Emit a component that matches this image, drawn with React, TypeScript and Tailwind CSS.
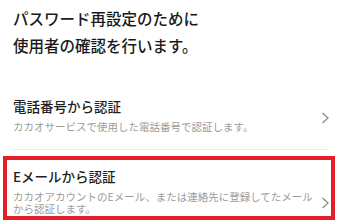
import React from 'react';

/**
 * Chevron pointing right, drawn thin and gray
 */
function Chevron() {
  return (
    <svg width="9" height="12" viewBox="0 0 9 12" fill="none" className="block">
      <path d="M1.5 1 L7 6 L1.5 11" stroke="#8c8c8c" strokeWidth="1.3" strokeLinejoin="miter" />
    </svg>
  );
}

interface RowProps {
  title: string;
  desc: string;
  chevronTop: string;
}

function AuthRow({ title, desc, chevronTop }: RowProps) {
  return (
    <div className="flex pl-[13px]">
      <div className="w-[305px]">
        <p className="text-[13.5px] leading-[20px] font-medium text-[#1e1e1e]">{title}</p>
        <p className="mt-[5px] text-[10.5px] leading-[12px] text-[#9c9c9c]">{desc}</p>
      </div>
      <div className={`flex-1 flex justify-start pl-[3px] ${chevronTop}`}>
        <Chevron />
      </div>
    </div>
  );
}

export default function App() {
  return (
    <div
      className="relative w-[340px] h-[223px] overflow-hidden bg-white flex flex-col"
      style={{ fontFamily: '"Noto Sans CJK JP", "Noto Sans", sans-serif' }}
    >
      {/* Heading */}
      <h1 className="pt-[5px] px-[13px] text-[15.5px] leading-[27px] font-medium text-[#1a1a1a]">
        パスワード再設定のために
        <br />
        使用者の確認を行います。
      </h1>

      <div className="mt-[37px]">
        <AuthRow
          title="電話番号から認証"
          desc="カカオサービスで使用した電話番号で認証します。"
          chevronTop="pt-[16px]"
        />
      </div>

      <div className="mt-[16px] ml-[13px] mr-[12px] h-px bg-[#ebebeb]" />

      <div className="mt-[16px]">
        <AuthRow
          title="Eメールから認証"
          desc="カカオアカウントのEメール、または連絡先に登録してたメールから認証します。"
          chevronTop="pt-[31px]"
        />
      </div>

      {/* Highlight annotation over the email option */}
      <div className="absolute left-[3px] top-[156px] w-[332px] h-[64px] border-[4px] border-[#e3202a] pointer-events-none" />
    </div>
  );
}
